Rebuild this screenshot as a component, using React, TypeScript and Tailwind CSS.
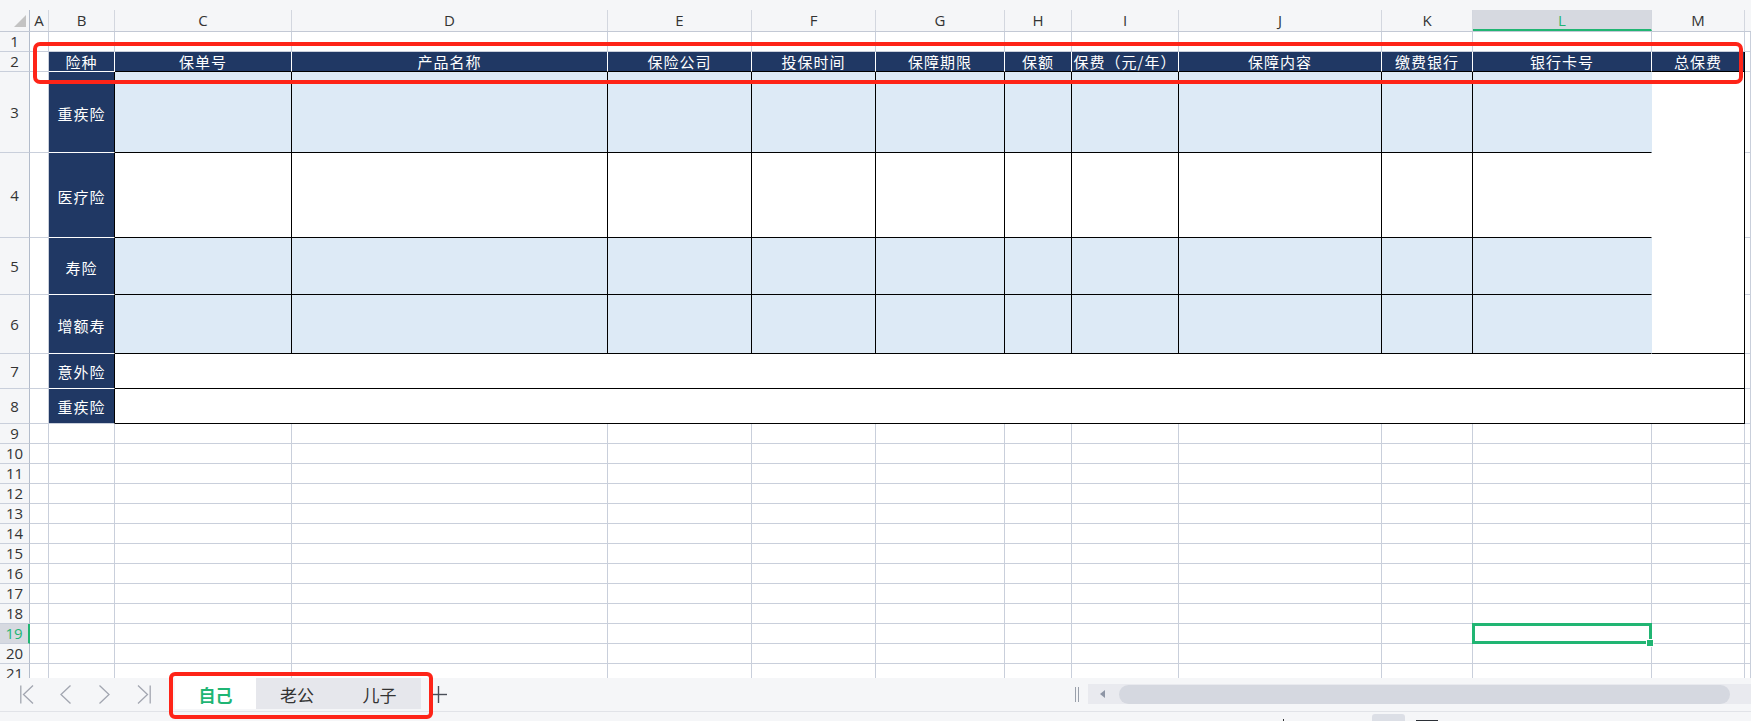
import React from "react";

const COLS = ["A", "B", "C", "D", "E", "F", "G", "H", "I", "J", "K", "L", "M"];
const HEADERS = ["险种", "保单号", "产品名称", "保险公司", "投保时间", "保障期限", "保额", "保费（元/年）", "保障内容", "缴费银行", "银行卡号", "总保费"];
const BODY = [
  { n: 3, label: "重疾险", blue: true },
  { n: 4, label: "医疗险", blue: false },
  { n: 5, label: "寿险", blue: true },
  { n: 6, label: "增额寿", blue: true },
];

const grid = "border-r border-b border-[#c9cfdb] bg-white";

function RowHead({ n, active }: { n: number; active?: boolean }) {
  return active ? (
    <div className="flex items-center justify-center border-b border-b-[#c9cfdb] border-r-2 border-r-[#21b573] bg-[#d6d9e0] text-[15px] text-[#21b573]">
      {n}
    </div>
  ) : (
    <div className="flex items-center justify-center border-b border-b-[#c9cfdb] border-r border-r-[#b3bccb] bg-[#f5f6f8] text-[15px] text-[#333]">
      {n}
    </div>
  );
}

function Chevron({ dir }: { dir: "first" | "prev" | "next" | "last" }) {
  const s = { stroke: "#a2a6b0", strokeWidth: 1.3, fill: "none" };
  if (dir === "first")
    return (
      <svg width="14" height="19" viewBox="0 0 14 19">
        <line x1="0.8" y1="0.5" x2="0.8" y2="18.5" {...s} />
        <polyline points="13,0.5 3.5,9.5 13,18.5" {...s} />
      </svg>
    );
  if (dir === "prev")
    return (
      <svg width="11" height="19" viewBox="0 0 11 19">
        <polyline points="10.5,0.5 1,9.5 10.5,18.5" {...s} />
      </svg>
    );
  if (dir === "next")
    return (
      <svg width="11" height="19" viewBox="0 0 11 19">
        <polyline points="0.5,0.5 10,9.5 0.5,18.5" {...s} />
      </svg>
    );
  return (
    <svg width="14" height="19" viewBox="0 0 14 19">
      <polyline points="1,0.5 10.5,9.5 1,18.5" {...s} />
      <line x1="13.2" y1="0.5" x2="13.2" y2="18.5" {...s} />
    </svg>
  );
}

export default function App() {
  const lowerRows = Array.from({ length: 13 }, (_, i) => i + 9);
  return (
    <div className="relative flex h-[721px] w-[1751px] flex-col overflow-hidden bg-white font-['Open_Sans','Noto_Sans_CJK_SC',sans-serif]">
      {/* Sheet */}
      <div className="h-[678px] overflow-hidden">
        <div className="grid grid-cols-[30px_19px_66px_177px_316px_144px_124px_129px_67px_107px_203px_91px_179px_93px_1fr] grid-rows-[32px_20px_20px_81px_85px_57px_59px_35px_35px] auto-rows-[20px]">
          {/* column headers */}
          <div className="border-b border-b-[#c3c9d5] bg-[#f5f6f8] pt-[10px]">
            <div className="flex h-full items-end justify-end border-r border-r-[#b3bccb] pb-[4px] pr-[3px]">
              <svg width="12" height="12" viewBox="0 0 12 12">
                <polygon points="12,0 12,12 0,12" fill="#c3c3c3" />
              </svg>
            </div>
          </div>
          {COLS.map((c) =>
            c === "L" ? (
              <div key={c} className="border-b border-b-[#c3c9d5] bg-[#f5f6f8] pt-[10px]">
                <div className="flex h-full items-center justify-center border-r border-r-[#d3d7df] border-b-2 border-b-[#21b573] bg-[#d6d9e0] pt-[2px] text-[15px] text-[#21b573]">
                  {c}
                </div>
              </div>
            ) : (
              <div key={c} className="border-b border-b-[#c3c9d5] bg-[#f5f6f8] pt-[10px]">
                <div className="flex h-full items-center justify-center border-r border-r-[#d3d7df] text-[15px] text-[#333]">
                  {c}
                </div>
              </div>
            )
          )}
          <div className="border-b border-b-[#c3c9d5] bg-[#f5f6f8]" />

          {/* row 1 */}
          <RowHead n={1} />
          {Array.from({ length: 14 }, (_, i) => (
            <div key={i} className={grid} />
          ))}

          {/* row 2 header */}
          <RowHead n={2} />
          <div className={grid} />
          {HEADERS.map((h, i) =>
            i === 0 ? (
              <div key={h} className="flex items-center justify-center border-r border-r-white border-b border-b-white bg-[#203864] pt-[2px] font-['Noto_Sans_CJK_SC',sans-serif] text-[15px] tracking-[1px] text-white">
                {h}
              </div>
            ) : i === HEADERS.length - 1 ? (
              <div key={h} className="flex items-center justify-center border-r border-r-black border-b border-b-black bg-[#203864] pt-[2px] font-['Noto_Sans_CJK_SC',sans-serif] text-[15px] tracking-[1px] text-white">
                {h}
              </div>
            ) : (
              <div key={h} className="flex items-center justify-center whitespace-nowrap border-r border-r-white border-b border-b-black bg-[#203864] pt-[2px] font-['Noto_Sans_CJK_SC',sans-serif] text-[15px] tracking-[1px] text-white">
                {h}
              </div>
            )
          )}
          <div className={grid} />

          {/* rows 3-6 */}
          {BODY.map((r) => (
            <React.Fragment key={r.n}>
              <RowHead n={r.n} />
              <div className={grid} />
              <div className="flex items-center justify-center border-r border-r-black border-b border-b-white bg-[#203864] pt-[5px] font-['Noto_Sans_CJK_SC',sans-serif] text-[15px] tracking-[1px] text-white">
                {r.label}
              </div>
              {Array.from({ length: 10 }, (_, i) =>
                i === 9 ? (
                  <div
                    key={i}
                    className={
                      r.blue
                        ? "border-r border-r-transparent border-b border-b-black bg-[#ddeaf6]"
                        : "border-r border-r-transparent border-b border-b-black bg-white"
                    }
                  />
                ) : (
                  <div
                    key={i}
                    className={
                      r.blue
                        ? "border-r border-b border-black bg-[#ddeaf6]"
                        : "border-r border-b border-black bg-white"
                    }
                  />
                )
              )}
              {r.n === 3 && <div className="row-span-4 border-r border-b border-black bg-white" />}
              <div className={grid} />
            </React.Fragment>
          ))}

          {/* rows 7-8 */}
          {[
            { n: 7, label: "意外险" },
            { n: 8, label: "重疾险" },
          ].map((r) => (
            <React.Fragment key={r.n}>
              <RowHead n={r.n} />
              <div className={grid} />
              <div
                className={
                  r.n === 7
                    ? "flex items-center justify-center border-r border-r-black border-b border-b-white bg-[#203864] pt-[2px] font-['Noto_Sans_CJK_SC',sans-serif] text-[15px] tracking-[1px] text-white"
                    : "flex items-center justify-center border-r border-r-black border-b border-b-[#c9cfdb] bg-[#203864] pt-[2px] font-['Noto_Sans_CJK_SC',sans-serif] text-[15px] tracking-[1px] text-white"
                }
              >
                {r.label}
              </div>
              <div className="col-span-11 border-r border-b border-black bg-white" />
              <div className={grid} />
            </React.Fragment>
          ))}

          {/* rows 9-21 */}
          {lowerRows.map((n) => (
            <React.Fragment key={n}>
              <RowHead n={n} active={n === 19} />
              {Array.from({ length: 14 }, (_, i) =>
                n === 19 && i === 11 ? (
                  <div key={i} className={"relative " + grid}>
                    <div className="absolute -left-[1px] -top-[1px] -right-[1px] -bottom-[1px] border-[3px] border-[#21b573]">
                      <div className="absolute -right-[5px] -bottom-[6px] h-[8px] w-[8px] border border-white bg-[#21b573]" />
                    </div>
                  </div>
                ) : (
                  <div key={i} className={grid} />
                )
              )}
            </React.Fragment>
          ))}
        </div>
      </div>

      {/* Sheet tab bar */}
      <div className="flex h-[33px] items-start bg-[#f5f6f8]">
        <div className="flex h-[33px] items-center pl-[7px]">
          <div className="flex w-[39px] justify-center"><Chevron dir="first" /></div>
          <div className="flex w-[39px] justify-center"><Chevron dir="prev" /></div>
          <div className="flex w-[39px] justify-center"><Chevron dir="next" /></div>
          <div className="flex w-[39px] justify-center"><Chevron dir="last" /></div>
        </div>
        <div className="ml-[12px] flex h-[31px] font-['Noto_Sans_CJK_SC',sans-serif] text-[17px]">
          <div className="flex w-[81px] items-center justify-center bg-white pt-[3px] font-bold text-[#1fb574]">自己</div>
          <div className="flex w-[82px] items-center justify-center bg-[#e6e7ec] pt-[3px] text-[#333]">老公</div>
          <div className="flex w-[83px] items-center justify-center bg-[#e6e7ec] pt-[3px] text-[#333]">儿子</div>
        </div>
        <div className="flex h-[33px] w-[34px] items-center justify-center">
          <svg width="17" height="17" viewBox="0 0 17 17">
            <line x1="8.5" y1="0" x2="8.5" y2="17" stroke="#4a4f58" strokeWidth="1.4" />
            <line x1="0" y1="8.5" x2="17" y2="8.5" stroke="#4a4f58" strokeWidth="1.4" />
          </svg>
        </div>
        <div className="ml-auto flex h-[33px] items-center">
          <div className="flex h-[15px] w-[18px] gap-[2px] pl-[5px]">
            <div className="w-px bg-[#9aa0ab]" />
            <div className="w-px bg-[#9aa0ab]" />
          </div>
          <div className="mb-[1px] flex h-[20px] w-[663px] items-center bg-[#e9eaef] pl-[12px] pr-[21px]">
            <svg width="5" height="8" viewBox="0 0 5 8">
              <polygon points="5,0 5,8 0,4" fill="#8e95a5" />
            </svg>
            <div className="ml-[14px] h-[19px] flex-1 rounded-full bg-[#d5d8e0]" />
          </div>
        </div>
      </div>

      {/* status bar (cut off) */}
      <div className="flex h-[10px] items-end border-t border-[#e1e3e8] bg-[#f5f6f8]">
        <div className="ml-[1283px] h-[2px] w-px bg-[#333]" />
        <div className="ml-[88px] h-[7px] w-[33px] rounded-t-[3px] bg-[#dcdfe6]" />
        <div className="ml-[11px] h-[1px] w-[22px] bg-[#2b2f36]" />
      </div>

      {/* annotation rectangles */}
      <div className="pointer-events-none absolute left-[33px] top-[42px] h-[42px] w-[1710px] rounded-[7px] border-4 border-[#fe2418]" />
      <div className="pointer-events-none absolute left-[169px] top-[672px] h-[47px] w-[264px] rounded-[6px] border-4 border-[#fe2418]" />
    </div>
  );
}
